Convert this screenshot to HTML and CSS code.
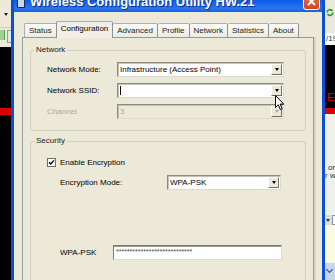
FILE: index.html
```html
<!DOCTYPE html>
<html>
<head>
  <title>Wireless Configuration Utility HW.21</title>
  <link rel="stylesheet" href="styles.css">
</head>
<body>
  <div class="desktop">
    <!-- window behind, left -->
    <div class="side side-left">
      <div class="lt-toolbar"><span class="lt-arrow"></span></div>
      <div class="lt-buttons"><span class="lt-green"></span><span class="lt-blue"></span></div>
      <div class="black lt-top"></div>
      <div class="red-bar"></div>
      <div class="black grow"></div>
    </div>

    <!-- Dialog -->
    <div class="dialog">
      <div class="titlebar">
        <span class="app-icon"></span>
        <span class="title">Wireless Configuration Utility HW.21</span>
        <span class="close-btn">
          <svg width="15" height="14" viewBox="0 0 15 14"><path d="M4 3 L11 10 M11 3 L4 10" stroke="#fff" stroke-width="2"/></svg>
        </span>
      </div>

      <div class="dialog-body">
        <div class="tabs">
          <div class="tab">Status</div>
          <div class="tab active">Configuration</div>
          <div class="tab">Advanced</div>
          <div class="tab">Profile</div>
          <div class="tab">Network</div>
          <div class="tab">Statistics</div>
          <div class="tab">About</div>
        </div>

        <div class="tab-panel">
          <fieldset class="group">
            <legend>Network</legend>
            <div class="rows">
              <div class="row">
                <label class="net-label">Network Mode:</label>
                <div class="combo net-combo">
                  <span class="combo-text">Infrastructure (Access Point)</span>
                  <span class="drop-btn"><i></i></span>
                </div>
              </div>
              <div class="row">
                <label class="net-label">Network SSID:</label>
                <div class="combo net-combo">
                  <span class="caret"></span>
                  <span class="drop-btn"><i></i></span>
                </div>
              </div>
              <div class="row">
                <label class="net-label disabled">Channel</label>
                <div class="combo net-combo is-disabled">
                  <span class="combo-text">3</span>
                  <span class="drop-btn"><i></i></span>
                </div>
              </div>
            </div>
          </fieldset>

          <fieldset class="group security">
            <legend>Security</legend>
            <div class="rows sec-rows">
              <div class="row check-row">
                <svg class="checkbox" width="9" height="9" viewBox="0 0 9 9">
                  <rect x="0.5" y="0.5" width="8" height="8" fill="#fff" stroke="#6d6d6d"/>
                  <path d="M2 4.2 L3.7 6 L7 2.4" fill="none" stroke="#000" stroke-width="1.4"/>
                </svg>
                <span>Enable Encryption</span>
              </div>
              <div class="row indent">
                <label class="enc-label">Encryption Mode:</label>
                <div class="combo enc-combo">
                  <span class="combo-text">WPA-PSK</span>
                  <span class="drop-btn"><i></i></span>
                </div>
              </div>
              <div class="row indent psk-row">
                <label class="psk-label">WPA-PSK</label>
                <div class="textbox">****************************</div>
              </div>
            </div>
          </fieldset>
        </div>
      </div>
    </div>

    <!-- window behind, right -->
    <div class="side side-right">
      <div class="rt-toolbar">
        <svg width="8" height="9" viewBox="0 0 8 9"><path d="M1 4.5 A3 3 0 0 1 6.5 3 M7 4.5 A3 3 0 0 1 1.5 6" fill="none" stroke="#2f9a2f" stroke-width="1.6"/></svg>
      </div>
      <div class="rt-address">/19</div>
      <div class="black rt-black"><span class="rt-e">E</span></div>
      <div class="red-bar rt-red"></div>
      <div class="rt-page">
        <div class="rt-line rt-line-a">or</div>
        <div class="rt-line">r w</div>
      </div>
      <div class="rt-combo"><span class="rt-arrow"></span><span class="rt-box"></span></div>
      <div class="rt-yellow"></div>
      <div class="rt-blue"><span class="rt-chevron"></span></div>
    </div>

    <svg class="cursor" width="11" height="16" viewBox="0 0 11 16">
      <path d="M0.5 0.5 L0.5 12.5 L3.3 9.8 L5.4 14.6 L7.2 13.8 L5.1 9.1 L8.8 9.1 Z" fill="#fff" stroke="#000" stroke-width="1"/>
    </svg>
  </div>
</body>
</html>
```

FILE: styles.css
```css
/* Base */
body, html {
  margin: 0;
  padding: 0;
}

body {
  width: 335px;
  height: 280px;
  overflow: hidden;
  font-family: "Liberation Sans", Arial, sans-serif;
  font-size: 8px;
  color: #000;
}

.desktop {
  position: relative;
  display: flex;
  width: 335px;
  height: 280px;
  overflow: hidden;
  background: #ece9d8;
}

/* Background windows */
.side {
  flex: none;
  display: flex;
  flex-direction: column;
}

.side-left {
  width: 11px;
}

.side-right {
  width: 10px;
}

.black {
  background: #000;
}

.grow {
  flex: 1;
}

.red-bar {
  height: 7px;
  background: #d80000;
}

.lt-toolbar {
  height: 28px;
  box-sizing: border-box;
  padding: 13px 0 0 4px;
  background: #ece9d8;
  border-bottom: 1px solid #cfcbbb;
}

.lt-arrow {
  display: block;
  width: 0;
  height: 0;
  border-left: 2px solid transparent;
  border-right: 2px solid transparent;
  border-top: 3px solid #222;
}

.lt-buttons {
  height: 19px;
  box-sizing: border-box;
  display: flex;
  gap: 2px;
  padding-top: 2px;
  background: #ece9d8;
}

.lt-green {
  width: 5px;
  height: 10px;
  background: #9fd18c;
  border-right: 1px solid #5aa33f;
}

.lt-blue {
  width: 4px;
  height: 11px;
  background: #dce7fa;
  border: 1px solid #7f9db9;
  border-right: none;
}

.lt-top {
  height: 61px;
}

.rt-toolbar {
  height: 33px;
  box-sizing: border-box;
  padding: 8px 0 0 1px;
  background: #ece9d8;
}

.rt-address {
  height: 12px;
  line-height: 12px;
  padding-left: 1px;
  font-size: 8px;
  color: #333;
  background: #fff;
  white-space: nowrap;
  overflow: hidden;
}

.rt-black {
  height: 63px;
  display: flex;
  align-items: flex-end;
}

.rt-e {
  color: #e00000;
  font-size: 11px;
  line-height: 11px;
  margin: 0 0 5px 2px;
}

.rt-red {
  height: 6px;
}

.rt-page {
  height: 101px;
  box-sizing: border-box;
  padding-top: 50px;
  background: #f1f0eb;
  color: #333;
  font-size: 8px;
  white-space: nowrap;
  overflow: hidden;
}

.rt-line {
  line-height: 8px;
}

.rt-line-a {
  padding-left: 3px;
}

.rt-combo {
  height: 10px;
  display: flex;
  align-items: center;
  gap: 2px;
  background: #e3e0d2;
}

.rt-arrow {
  width: 0;
  height: 0;
  margin-left: 1px;
  border-left: 2px solid transparent;
  border-right: 2px solid transparent;
  border-top: 3px solid #333;
}

.rt-box {
  flex: 1;
  height: 8px;
  background: #fff;
  border: 1px solid #7f9db9;
  border-right: none;
}

.rt-yellow {
  height: 38px;
  background: #fffbe0;
}

.rt-blue {
  flex: 1;
  background: #c8d5f1;
  padding: 4px 0 0 2px;
}

.rt-chevron {
  display: block;
  width: 4px;
  height: 4px;
  border-right: 1.5px solid #26418f;
  border-bottom: 1.5px solid #26418f;
  transform: rotate(45deg);
}

/* Dialog frame */
.dialog {
  flex: none;
  width: 314px;
  box-sizing: border-box;
  display: flex;
  flex-direction: column;
  border-left: 3px solid #0a4fd8;
  border-right: 3px solid #0a4fd8;
  background: #ece9d8;
}

.titlebar {
  height: 12px;
  flex: none;
  display: flex;
  align-items: flex-end;
  overflow: hidden;
  background: linear-gradient(to bottom, #0b5be8, #2a74f0 70%, #1a5fe0);
}

.app-icon {
  flex: none;
  width: 6px;
  height: 7px;
  margin: 0 5px 4px 3px;
  background: #c9d6ea;
  border: 1px solid #1b2c5a;
}

.title {
  color: #fff;
  font-size: 13px;
  font-weight: bold;
  line-height: 13px;
  margin-bottom: 4px;
  white-space: nowrap;
  text-shadow: 1px 1px 0 #0a2e8a;
}

.close-btn {
  flex: none;
  margin: 0 2px 2px auto;
  width: 15px;
  height: 14px;
  display: flex;
  align-items: flex-end;
  justify-content: center;
  border: 1px solid #fff;
  border-radius: 3px;
  background: linear-gradient(to bottom, #e46a44, #d3461c);
}

.close-btn svg {
  display: block;
}

.dialog-body {
  flex: 1;
  display: flex;
  flex-direction: column;
  padding: 9px 8px 0 8px;
}

/* Tabs */
.tabs {
  display: flex;
  align-items: flex-end;
  height: 16px;
  padding-left: 2px;
  position: relative;
  z-index: 1;
}

.tab {
  height: 14px;
  box-sizing: border-box;
  padding: 0 4px;
  line-height: 13px;
  white-space: nowrap;
  color: #222;
  border-top: 1px solid #a9aeb0;
  border-right: 1px solid #8d9294;
  border-radius: 2px 2px 0 0;
  background: linear-gradient(to bottom, #fbfbf8, #edebe1);
}

.tab:first-child {
  border-left: 1px solid #a9aeb0;
}

.tab.active {
  height: 17px;
  margin: 0 0 -1px -1px;
  line-height: 14px;
  padding-bottom: 2px;
  color: #000;
  border-left: 1px solid #8d9294;
  background: #f1efe6;
}

.tab-panel {
  flex: 1;
  padding: 7px 7px 0 7px;
  border: 1px solid #919b9c;
  border-bottom: none;
  background: #ece9d8;
  box-shadow: 2px 0 0 #d8d5c6;
}

/* Group boxes */
.group {
  margin: 0;
  padding: 0 0 11px 3px;
  min-width: 0;
  border: 1px solid #d0d0bf;
  border-radius: 3px;
}

.group legend {
  padding: 0 2px;
  line-height: 10px;
  color: #1a1a1a;
}

.security {
  margin-top: 5px;
  border-bottom: none;
  padding-bottom: 40px;
}

.rows {
  display: flex;
  flex-direction: column;
  gap: 6px;
  padding-left: 13px;
  margin-top: 7px;
}

.row {
  display: flex;
  align-items: center;
  height: 15px;
  white-space: nowrap;
}

.net-label {
  width: 70px;
  flex: none;
}

.disabled {
  color: #aca899;
}

.sec-rows {
  margin-top: 9px;
}

.check-row {
  height: 14px;
}

.checkbox {
  flex: none;
  margin-right: 4px;
}

.indent {
  padding-left: 13px;
}

.enc-label {
  width: 107px;
  flex: none;
}

.psk-row {
  margin-top: 49px;
}

.psk-label {
  width: 53px;
  flex: none;
}

/* Combo boxes */
.combo {
  height: 15px;
  box-sizing: border-box;
  display: flex;
  align-items: center;
  background: #fff;
  border: 1px solid;
  border-color: #8a8a86 #dcdad0 #dcdad0 #8a8a86;
  box-shadow: inset 1px 1px 0 #c4c2b8;
}

.net-combo {
  width: 167px;
}

.enc-combo {
  width: 114px;
}

.combo-text {
  flex: 1;
  padding-left: 2px;
}

.caret {
  width: 1px;
  height: 9px;
  margin-left: 2px;
  background: #000;
  flex: none;
}

.caret + .drop-btn {
  margin-left: auto;
}

.drop-btn {
  flex: none;
  width: 11px;
  height: 11px;
  margin-right: 1px;
  box-sizing: border-box;
  display: flex;
  align-items: center;
  justify-content: center;
  background: #ece9d8;
  border: 1px solid;
  border-color: #fff #6f6f6a #6f6f6a #fff;
}

.drop-btn i {
  width: 0;
  height: 0;
  border-left: 2.5px solid transparent;
  border-right: 2.5px solid transparent;
  border-top: 3px solid #000;
}

.is-disabled {
  background: #ece9d8;
}

.is-disabled .combo-text {
  color: #aca899;
}

.is-disabled .drop-btn i {
  border-top-color: #aca899;
}

/* Text box */
.textbox {
  width: 169px;
  height: 15px;
  box-sizing: border-box;
  padding: 1px 0 0 2px;
  line-height: 9px;
  font-size: 7px;
  color: #444;
  overflow: hidden;
  background: #fff;
  border: 1px solid;
  border-color: #7a7a76 #dcdad0 #dcdad0 #7a7a76;
  box-shadow: inset 0 1px 0 #9a9890;
}

/* Mouse pointer over the SSID combo */
.cursor {
  position: absolute;
  left: 275px;
  top: 95px;
}
```
